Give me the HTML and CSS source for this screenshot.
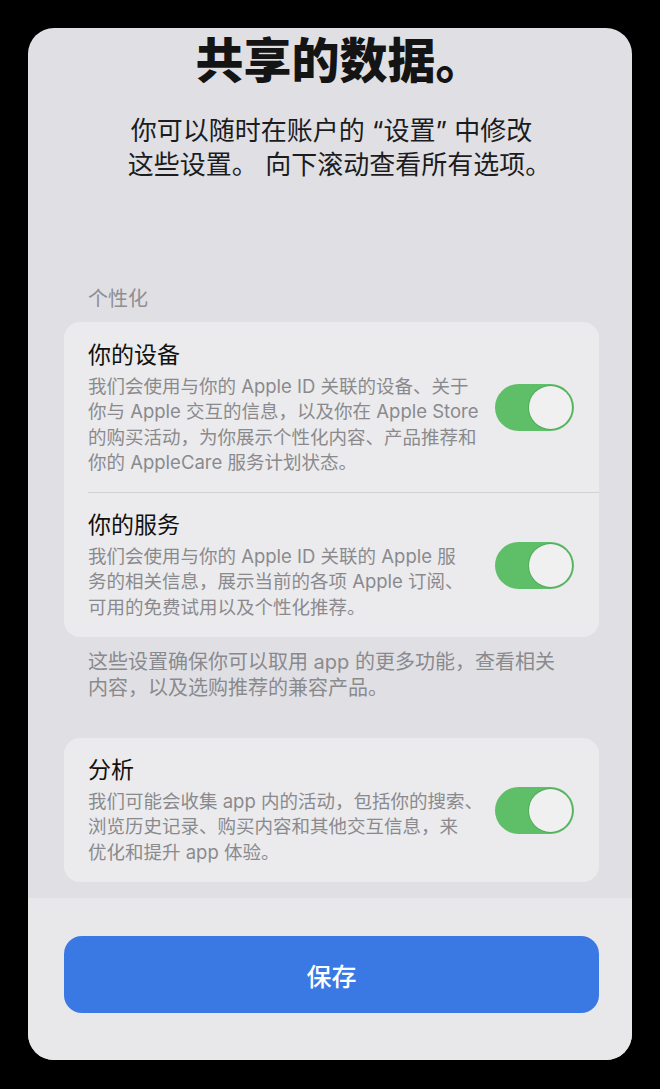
FILE: index.html
```html
<!DOCTYPE html>
<html lang="zh-CN">
<head>
<meta charset="utf-8">
<title>共享的数据</title>
<link rel="stylesheet" href="styles.css">
</head>
<body>
<div class="sheet">
  <div class="scroll">
    <h1 class="title">共享的数据。</h1>
    <p class="subtitle"><span class="sub-line">你可以随时在账户的 “设置” 中修改</span><span class="sub-line sub-line-2">这些设置。 向下滚动查看所有选项。</span></p>

    <div class="section-label">个性化</div>
    <div class="card">
      <div class="row">
        <div class="row-text">
          <div class="row-title">你的设备</div>
          <div class="row-desc">我们会使用与你的 Apple ID 关联的设备、关于<br>你与 Apple 交互的信息，以及你在 Apple Store<br>的购买活动，为你展示个性化内容、产品推荐和<br>你的 AppleCare 服务计划状态。</div>
        </div>
        <div class="toggle"><span class="knob"></span></div>
      </div>
      <div class="row row-divided">
        <div class="row-text">
          <div class="row-title">你的服务</div>
          <div class="row-desc">我们会使用与你的 Apple ID 关联的 Apple 服<br>务的相关信息，展示当前的各项 Apple 订阅、<br>可用的免费试用以及个性化推荐。</div>
        </div>
        <div class="toggle"><span class="knob"></span></div>
      </div>
    </div>
    <p class="footnote">这些设置确保你可以取用 app 的更多功能，查看相关<br>内容，以及选购推荐的兼容产品。</p>

    <div class="card card-analytics">
      <div class="row row-analytics">
        <div class="row-text">
          <div class="row-title">分析</div>
          <div class="row-desc">我们可能会收集 app 内的活动，包括你的搜索、<br>浏览历史记录、购买内容和其他交互信息，来<br>优化和提升 app 体验。</div>
        </div>
        <div class="toggle"><span class="knob"></span></div>
      </div>
    </div>
  </div>
  <div class="bottom-bar">
    <button class="save-btn">保存</button>
  </div>
</div>
</body>
</html>
```

FILE: styles.css
```css
html, body {
  margin: 0;
  padding: 0;
  background: #000;
}

body {
  width: 660px;
  height: 1089px;
  overflow: hidden;
  font-family: "Inter", "Noto Sans CJK SC", sans-serif;
}

.sheet {
  margin: 28px 28px 0 28px;
  width: 604px;
  height: 1032px;
  border-radius: 26px;
  background: #e0e0e4;
  display: flex;
  flex-direction: column;
}

.scroll {
  flex: 1;
  padding: 0 33px 0 36px;
}

.title {
  margin: 0;
  padding-left: 16px;
  font-family: "Noto Sans CJK SC", sans-serif;
  font-size: 48px;
  font-weight: 900;
  line-height: 58px;
  text-align: center;
  color: #141414;
}

.subtitle {
  margin: 28px 0 0 0;
  font-size: 26px;
  line-height: 34px;
  text-align: center;
  color: #1c1c1e;
}

.sub-line {
  display: block;
}

.sub-line-2 {
  padding-left: 16px;
}

.section-label {
  margin-top: 104px;
  padding-left: 24px;
  font-size: 20px;
  line-height: 26px;
  color: #8e8e93;
}

.card {
  margin-top: 10px;
  background: #ebebed;
  border-radius: 16px;
}

.card-analytics {
  margin-top: 37px;
}

.row {
  margin-left: 24px;
  padding: 18px 25px 17px 0;
  display: flex;
  align-items: center;
  gap: 12px;
}

.row-divided {
  border-top: 1px solid #d2d2d5;
  padding-top: 17px;
}

.row-analytics {
  padding-top: 17px;
}

.row-text {
  flex: 1;
  min-width: 0;
  white-space: nowrap;
}

.row-title {
  font-size: 23px;
  line-height: 30px;
  color: #111;
}

.row-desc {
  margin-top: 4px;
  font-size: 18.5px;
  line-height: 25.3px;
  color: #8a8a8e;
}

.toggle {
  flex: none;
  width: 79px;
  height: 47px;
  border-radius: 24px;
  background: #5fbe68;
  position: relative;
}

.knob {
  position: absolute;
  top: 2px;
  right: 2px;
  width: 43px;
  height: 43px;
  border-radius: 50%;
  background: #f0f0f0;
  box-shadow: 0 0 0 1px rgba(40, 120, 50, 0.25);
}

.footnote {
  margin: 12px 0 0 0;
  padding-left: 24px;
  font-size: 20px;
  line-height: 26px;
  color: #8a8a8e;
}

.bottom-bar {
  flex: none;
  height: 162px;
  box-sizing: border-box;
  padding: 38px 33px 0 36px;
  background: #e8e8ea;
  border-radius: 0 0 26px 26px;
}

.save-btn {
  display: block;
  width: 100%;
  height: 77px;
  border: none;
  border-radius: 18px;
  background: #3a78e3;
  color: #fff;
  font-family: "Noto Sans CJK SC", sans-serif;
  font-size: 25px;
  font-weight: 500;
  cursor: pointer;
}
```
